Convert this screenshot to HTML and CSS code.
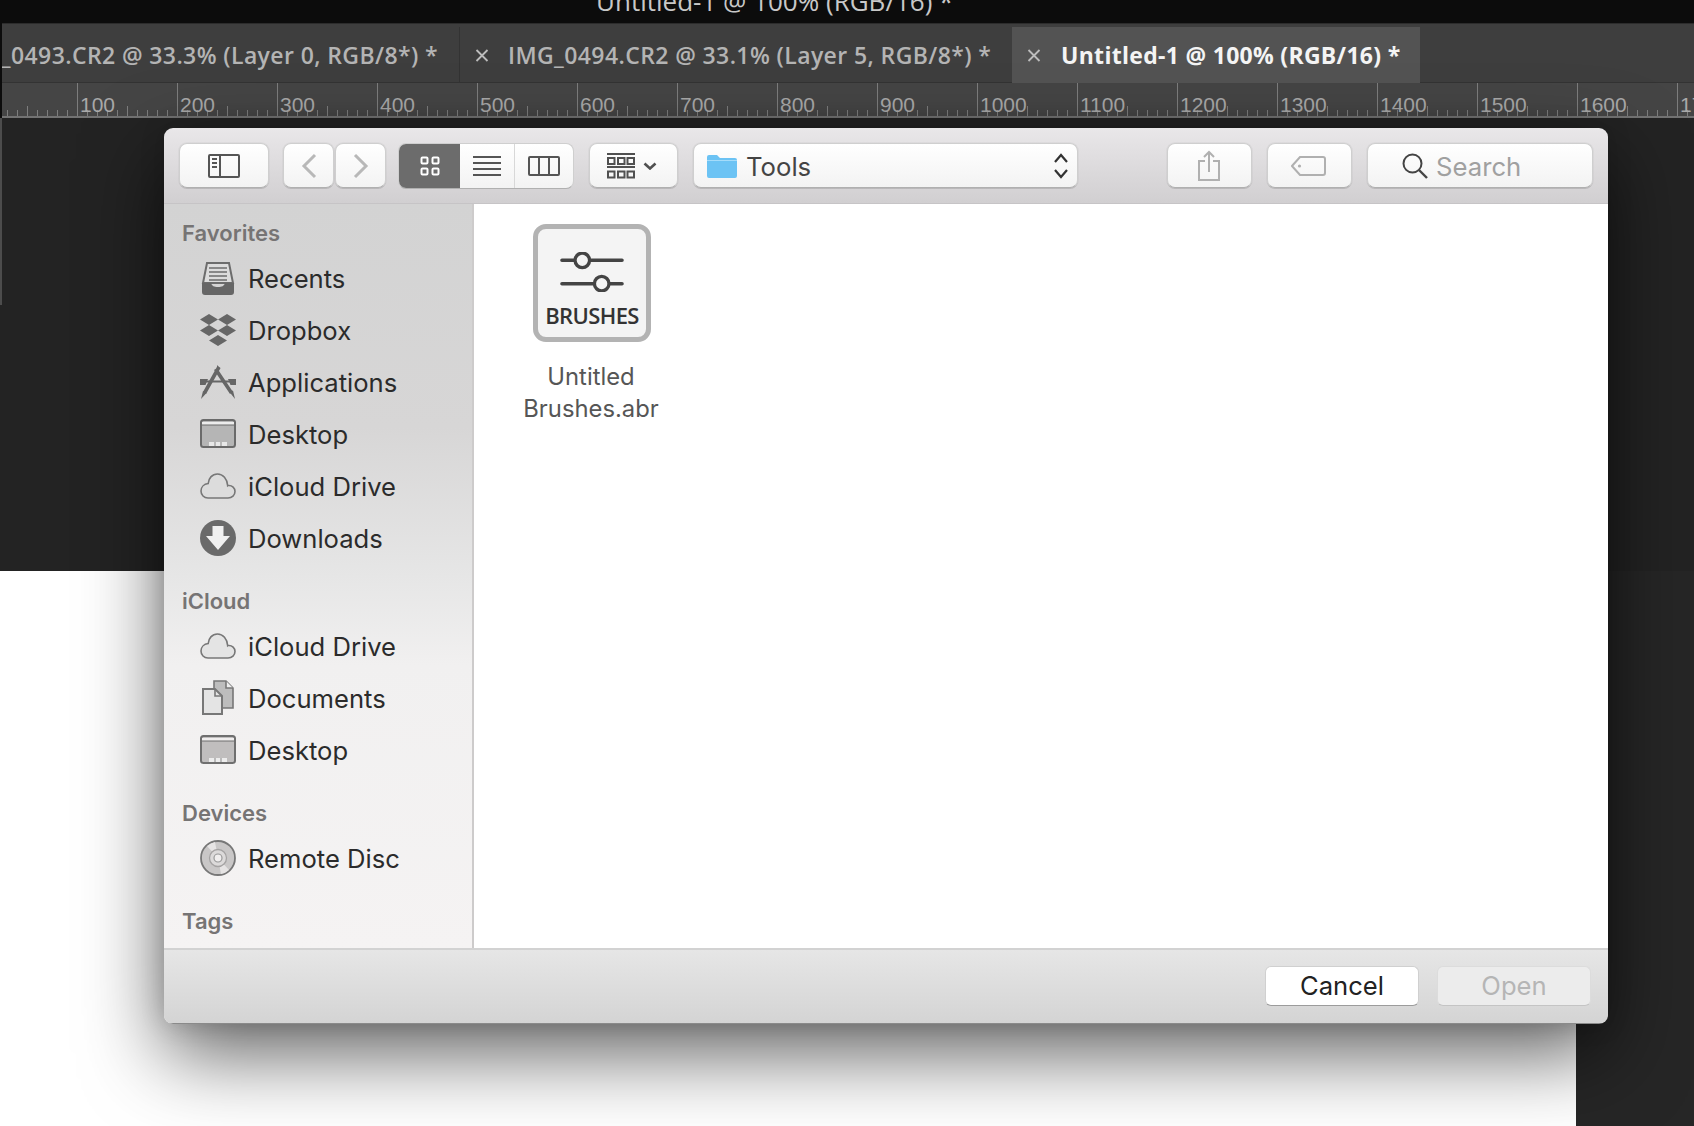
FILE: index.html
```html
<!DOCTYPE html>
<html lang="en">
<head>
<meta charset="utf-8">
<title>Open dialog</title>
<link rel="stylesheet" href="styles.css">
</head>
<body>
<div class="app">
  <div class="titlebar"><span class="title">Untitled-1 @ 100% (RGB/16) *</span></div>
  <div class="tabs">
    <div class="tab tab-first"><span class="tab-text">_0493.CR2 @ 33.3% (Layer 0, RGB/8*) *</span></div>
    <div class="tab tab-second">
      <svg class="close" width="14" height="13" viewBox="0 0 14 13"><path d="M1.5 1l11 11M12.5 1l-11 11"/></svg>
      <span class="tab-text">IMG_0494.CR2 @ 33.1% (Layer 5, RGB/8*) *</span>
    </div>
    <div class="tab tab-active">
      <svg class="close" width="14" height="13" viewBox="0 0 14 13"><path d="M1.5 1l11 11M12.5 1l-11 11"/></svg>
      <span class="tab-text">Untitled-1 @ 100% (RGB/16) *</span>
    </div>
  </div>
  <div class="ruler">
    <span class="mark">100</span><span class="mark">200</span><span class="mark">300</span><span class="mark">400</span><span class="mark">500</span><span class="mark">600</span><span class="mark">700</span><span class="mark">800</span><span class="mark">900</span><span class="mark">1000</span><span class="mark">1100</span><span class="mark">1200</span><span class="mark">1300</span><span class="mark">1400</span><span class="mark">1500</span><span class="mark">1600</span><span class="mark">1700</span>
  </div>
  <div class="canvas-dark"><div class="canvas-edge"></div></div>
  <div class="canvas-lower"><div class="paper"></div><div class="pasteboard"></div></div>
  <div class="app-edge"></div>

  <div class="dialog">
    <div class="toolbar">
      <button class="btn btn-sidebar">
        <svg width="32" height="24" viewBox="0 0 32 24"><g fill="none" stroke="#555" stroke-width="2"><rect x="1" y="1" width="30" height="22" rx="1"/><path d="M12 1v22"/></g><path d="M4 5h5M4 9h5M4 13h5" stroke="#555" stroke-width="2"/></svg>
      </button>
      <div class="nav">
        <button class="btn btn-nav"><svg width="16" height="26" viewBox="0 0 16 26"><path d="M14 2L3 13l11 11" fill="none" stroke="#b8b8b8" stroke-width="3"/></svg></button>
        <button class="btn btn-nav"><svg width="16" height="26" viewBox="0 0 16 26"><path d="M2 2l11 11L2 24" fill="none" stroke="#b8b8b8" stroke-width="3"/></svg></button>
      </div>
      <div class="segment">
        <div class="seg seg-on">
          <svg width="20" height="20" viewBox="0 0 20 20"><g fill="none" stroke="#fff" stroke-width="2"><rect x="1.5" y="1.5" width="6" height="6" rx="1"/><rect x="12.5" y="1.5" width="6" height="6" rx="1"/><rect x="1.5" y="12.5" width="6" height="6" rx="1"/><rect x="12.5" y="12.5" width="6" height="6" rx="1"/></g></svg>
        </div>
        <div class="seg seg-list">
          <svg width="28" height="20" viewBox="0 0 28 20"><path d="M0 1h28M0 7h28M0 13h28M0 19h28" stroke="#555" stroke-width="2"/></svg>
        </div>
        <div class="seg seg-cols">
          <svg width="32" height="20" viewBox="0 0 32 20"><g fill="none" stroke="#555" stroke-width="2"><rect x="1" y="1" width="30" height="18" rx="1"/><path d="M11 1v18M21 1v18"/></g></svg>
        </div>
      </div>
      <button class="btn btn-group">
        <svg width="28" height="26" viewBox="0 0 28 26"><g stroke="#505050" stroke-width="2" fill="none"><path d="M0 1h28M0 14h28"/><rect x="1" y="5" width="6.5" height="6"/><rect x="11" y="5" width="6.5" height="6"/><rect x="20.500" y="5" width="6.5" height="6"/><rect x="1" y="18.500" width="6.5" height="6"/><rect x="11" y="18.500" width="6.5" height="6"/><rect x="20.500" y="18.500" width="6.5" height="6"/></g></svg>
        <svg width="14" height="8" viewBox="0 0 14 8"><path d="M1.500 1.500L7 6.500l5.500-5" fill="none" stroke="#505050" stroke-width="2.600"/></svg>
      </button>
      <button class="btn btn-path">
        <svg width="30" height="24" viewBox="0 0 30 24"><path d="M0 3a2 2 0 0 1 2-2h8l3 3h15a2 2 0 0 1 2 2v16a2 2 0 0 1-2 2H2a2 2 0 0 1-2-2z" fill="#6cc3f4"/><path d="M0 6h30v1H0z" fill="#a5dcfa"/></svg>
        <span class="path-name">Tools</span>
        <svg class="stepper" width="16" height="26" viewBox="0 0 16 26"><path d="M2 9l6-7 6 7M2 17l6 7 6-7" fill="none" stroke="#333" stroke-width="2.200"/></svg>
      </button>
      <button class="btn btn-share">
        <svg width="24" height="31" viewBox="0 0 24 31"><g fill="none" stroke="#b0b0b0" stroke-width="2"><path d="M8 11H2v19h20V11h-6"/><path d="M12 22V2M7 7l5-5 5 5"/></g></svg>
      </button>
      <button class="btn btn-tag">
        <svg width="35" height="20" viewBox="0 0 35 20"><path d="M9 1h23a2 2 0 0 1 2 2v14a2 2 0 0 1-2 2H9L1 10z" fill="none" stroke="#b0b0b0" stroke-width="2"/><circle cx="8.500" cy="10" r="1.600" fill="#b0b0b0"/></svg>
      </button>
      <div class="btn btn-search">
        <svg width="26" height="26" viewBox="0 0 26 26"><circle cx="10.500" cy="10.500" r="9" fill="none" stroke="#444" stroke-width="2"/><path d="M17 17l8 8" stroke="#444" stroke-width="2.400"/></svg>
        <span class="search-text">Search</span>
      </div>
    </div>

    <div class="main">
      <nav class="sidebar">
        <div class="head">Favorites</div>
        <div class="row">
          <svg class="ico" width="36" height="36" viewBox="0 0 36 36"><path d="M7 3h22l4 20H3z" fill="#dcdcdc" stroke="#6c6c6c" stroke-width="2"/><path d="M9 8h18M9 12h18M9 16h18M9 20h18" stroke="#6c6c6c" stroke-width="1.600"/><path d="M2 23h9c1 3 3 4 7 4s6-1 7-4h9v9a3 3 0 0 1-3 3H5a3 3 0 0 1-3-3z" fill="#666"/></svg>
          <span>Recents</span>
        </div>
        <div class="row">
          <svg class="ico" width="36" height="36" viewBox="0 0 36 36"><path d="M9 2l9 5.500-9 5.500-9-5.500zM27 2l9 5.500-9 5.500-9-5.500zM9 13l9 5.500-9 5.500-9-5.500zM27 13l9 5.500-9 5.500-9-5.500zM18 23l9 5.500-9 5.500-9-5.500z" fill="#666"/></svg>
          <span>Dropbox</span>
        </div>
        <div class="row">
          <svg class="ico" width="36" height="36" viewBox="0 0 36 36"><path d="M0 15h8l-2.500 6H0zM36 15h-8l2.500 6H36z" fill="#666"/><path d="M6 17.500h24" stroke="#666" stroke-width="2"/><path d="M19 3L4.500 29M15.500 5L31.500 29" fill="none" stroke="#666" stroke-width="3.600"/><path d="M17 1l3 3-3 2zM3 27l3.500 2L1 35zM29.500 28l3.500-1.500L35 35z" fill="#666"/></svg>
          <span>Applications</span>
        </div>
        <div class="row">
          <svg class="ico" width="36" height="36" viewBox="0 0 36 36"><rect x="1" y="4" width="34" height="27" rx="2.500" fill="#b5b5b5" stroke="#6a6a6a" stroke-width="2"/><path d="M2 6h32v3H2z" fill="#ececec"/><path d="M2 9h32" stroke="#6a6a6a"/><path d="M9 26h18v4H9z" fill="#e8e8e8"/><path d="M15 26v4M21 26v4" stroke="#888"/></svg>
          <span>Desktop</span>
        </div>
        <div class="row">
          <svg class="ico" width="36" height="36" viewBox="0 0 36 36"><path d="M8 30H28c4 0 7-3 7-6.500 0-3.500-3-6-6-6-.5 0-1 0-1.300.2C27.200 11 23 6 17.500 6 12 6 8.500 10.500 8.200 15.500 4 16 1 19 1 23c0 4 3 7 7 7z" fill="#dcdcdc" stroke="#777" stroke-width="1.600"/></svg>
          <span>iCloud Drive</span>
        </div>
        <div class="row">
          <svg class="ico" width="36" height="36" viewBox="0 0 36 36"><circle cx="18" cy="18" r="18" fill="#6a6a6a"/><path d="M12.500 6h11v10h6.500L18 30 6 16h6.500z" fill="#f0f0f0"/></svg>
          <span>Downloads</span>
        </div>

        <div class="head head-gap">iCloud</div>
        <div class="row">
          <svg class="ico" width="36" height="36" viewBox="0 0 36 36"><path d="M8 30H28c4 0 7-3 7-6.500 0-3.500-3-6-6-6-.5 0-1 0-1.300.2C27.200 11 23 6 17.500 6 12 6 8.500 10.500 8.200 15.500 4 16 1 19 1 23c0 4 3 7 7 7z" fill="#e4e4e4" stroke="#777" stroke-width="1.600"/></svg>
          <span>iCloud Drive</span>
        </div>
        <div class="row">
          <svg class="ico" width="36" height="36" viewBox="0 0 36 36"><path d="M14 1h12l7 7v20H14z" fill="#bdbdbd" stroke="#777" stroke-width="1.600"/><path d="M26 1v7h7" fill="#eee" stroke="#777" stroke-width="1.600"/><path d="M3 9h12l7 7v18H3z" fill="#e4e4e4" stroke="#777" stroke-width="2"/><path d="M15 9v7h7" fill="none" stroke="#777" stroke-width="1.600"/></svg>
          <span>Documents</span>
        </div>
        <div class="row">
          <svg class="ico" width="36" height="36" viewBox="0 0 36 36"><rect x="1" y="4" width="34" height="27" rx="2.500" fill="#c0bebe" stroke="#6f6f6f" stroke-width="2"/><path d="M2 6h32v3H2z" fill="#f0eeee"/><path d="M2 9h32" stroke="#6f6f6f"/><path d="M9 26h18v4H9z" fill="#ececec"/><path d="M15 26v4M21 26v4" stroke="#888"/></svg>
          <span>Desktop</span>
        </div>

        <div class="head head-gap">Devices</div>
        <div class="row">
          <svg class="ico" width="36" height="36" viewBox="0 0 36 36"><circle cx="18" cy="18" r="17" fill="#c9c7c7" stroke="#777" stroke-width="1.800"/><path d="M18 18L7 6a16 16 0 0 1 8-4zM18 18l11 12a16 16 0 0 1-8 4z" fill="#e6e4e4"/><circle cx="18" cy="18" r="8.500" fill="#dcdada" stroke="#a5a3a3" stroke-width="1.300"/><circle cx="18" cy="18" r="4" fill="#f0eeee" stroke="#999" stroke-width="1.200"/></svg>
          <span>Remote Disc</span>
        </div>

        <div class="head head-gap">Tags</div>
      </nav>

      <section class="files">
        <div class="file">
          <div class="file-icon">
            <svg width="64" height="40" viewBox="0 0 66 40"><g fill="none" stroke="#444" stroke-width="3.600" stroke-linecap="round"><path d="M2 8h13M31 8h33M2 32h33M51 32h13"/></g><g fill="#f4f4f4" stroke="#444" stroke-width="3.400"><circle cx="23" cy="8" r="7.500"/><circle cx="43" cy="32" r="7.500"/></g></svg>
            <span class="file-badge">BRUSHES</span>
          </div>
          <div class="file-name">Untitled<br>Brushes.abr</div>
        </div>
      </section>
    </div>

    <div class="footer">
      <button class="action action-cancel">Cancel</button>
      <button class="action action-open">Open</button>
    </div>
  </div>
</div>
</body>
</html>
```
FILE: styles.css
```css
* { box-sizing: border-box; }
html, body { margin: 0; padding: 0; }
body {
  width: 1694px;
  height: 1126px;
  overflow: hidden;
  background: #232323;
  font-family: Inter, "Liberation Sans", sans-serif;
}
.app {
  position: relative;
  width: 1694px;
  height: 1126px;
  display: flex;
  flex-direction: column;
  overflow: hidden;
}
.app-edge {
  position: absolute;
  left: 0;
  top: 0;
  width: 2px;
  height: 118px;
  background: #0c0c0c;
}

/* Photoshop chrome */
.titlebar {
  height: 23px;
  flex: none;
  padding-left: 596px;
  background: #0c0c0c;
  display: flex;
  overflow: hidden;
}
.title {
  margin-top: -17px;
  font: 400 26px/36px "Open Sans", sans-serif;
  color: #c8c8c8;
  white-space: nowrap;
}
.tabs {
  height: 60px;
  flex: none;
  display: flex;
  padding-top: 3px;
  background: #3e3e3e;
  border-top: 1px solid #2c2c2c;
  border-bottom: 1px solid #333;
}
.tab {
  display: flex;
  align-items: center;
  height: 56px;
  white-space: nowrap;
  color: #b4b4b4;
}
.tab-text {
  font: 600 23px/30px "Open Sans", sans-serif;
  letter-spacing: 0.4px;
}
.tab-first {
  width: 459px;
  justify-content: flex-end;
  padding-right: 21px;
  overflow: hidden;
}
.tab-second {
  width: 553px;
  padding-left: 15px;
  gap: 19px;
  border-left: 1px solid #333;
}
.tab-active {
  width: 408px;
  padding-left: 15px;
  gap: 20px;
  background: #535353;
  color: #f4f4f4;
}
.tab-active .tab-text { font-weight: 700; letter-spacing: 0.3px; }
.close path { fill: none; stroke: #bdbdbd; stroke-width: 1.8; }
.ruler {
  height: 35px;
  flex: none;
  display: flex;
  padding-left: 77px;
  background-color: #454545;
  background-image:
    linear-gradient(90deg, #7d7d7d 1px, transparent 1px),
    linear-gradient(90deg, #7d7d7d 1px, transparent 1px);
  background-size: 10px 6px, 100px 10px;
  background-position: 7px bottom, 27px bottom;
  background-repeat: repeat-x;
  border-bottom: 2px solid #737373;
}
.mark {
  width: 100px;
  flex: none;
  padding: 10px 0 0 2px;
  border-left: 1px solid #7d7d7d;
  font: 400 21px/23px "Liberation Sans", sans-serif;
  color: #a9a9a9;
}
.canvas-dark {
  height: 453px;
  flex: none;
  background: #232323;
}
.canvas-edge {
  width: 2px;
  height: 187px;
  background: #4c4c4c;
}
.canvas-lower {
  flex: 1;
  display: flex;
}
.paper { flex: 1; background: #fff; }
.pasteboard { width: 118px; background: #262626; }

/* Dialog */
.dialog {
  position: absolute;
  z-index: 1;
  left: 164px;
  top: 128px;
  width: 1444px;
  height: 896px;
  display: flex;
  flex-direction: column;
  border-radius: 9px;
  overflow: hidden;
}
.toolbar {
  height: 76px;
  flex: none;
  display: flex;
  align-items: flex-start;
  gap: 15px;
  padding: 15px 15px 0;
  background: linear-gradient(#e9e7e9, #d1cfd1);
  border-bottom: 1px solid #c6c4c6;
}
.btn {
  height: 45px;
  flex: none;
  display: flex;
  align-items: center;
  justify-content: center;
  padding: 0;
  border: 1px solid #cfcfcf;
  border-bottom-color: #b0b0b0;
  border-radius: 8px;
  background: linear-gradient(#ffffff, #f3f3f3);
  box-shadow: 0 0 0 1px rgba(0, 0, 0, 0.03), 0 1px 0 rgba(0, 0, 0, 0.1);
  font-family: inherit;
}
.btn-sidebar { width: 90px; }
.nav { display: flex; gap: 1px; margin: 0 -3px 0 -1px; }
.btn-nav { width: 51px; }
.segment {
  width: 176px;
  height: 46px;
  flex: none;
  display: flex;
  border-radius: 8px;
  overflow: hidden;
  border: 1px solid #cfcfcf;
  border-bottom-color: #b0b0b0;
  background: linear-gradient(#ffffff, #f3f3f3);
}
.seg { display: flex; align-items: center; justify-content: center; }
.seg-on { width: 61px; padding-left: 1px; background: #6c6c6c; }
.seg-list { width: 55px; border-right: 1px solid #d8d8d8; }
.seg-cols { width: 58px; }
.btn-group { width: 89px; gap: 8px; padding-right: 3px; }
.btn-path {
  width: 385px;
  justify-content: flex-start;
  padding: 0 8px 0 13px;
  gap: 9px;
}
.path-name { padding-top: 2px; font-size: 25.7px; color: #444; }
.stepper { margin-left: auto; }
.btn-share { width: 85px; margin-left: 74px; padding-right: 2px; }
.btn-tag { width: 85px; padding-right: 3px; }
.btn-search {
  width: 226px;
  justify-content: flex-start;
  padding-left: 34px;
  gap: 8px;
}
.search-text { padding-top: 2px; font-size: 25.7px; color: #a0a0a0; }

.main {
  flex: 1;
  display: flex;
  min-height: 0;
}
.sidebar {
  width: 310px;
  flex: none;
  padding-top: 10px;
  overflow: hidden;
  border-right: 2px solid #cdcbcb;
  background: linear-gradient(#d3d3d3 0, #d7d6d6 30%, #e6e6e6 50%, #f1f0f0 62%, #f5f3f3 100%);
}
.head {
  height: 38px;
  padding-left: 18px;
  font-size: 22px;
  font-weight: 600;
  line-height: 39px;
  color: #767474;
}
.head-gap { margin-top: 18px; }
.row {
  height: 52px;
  display: flex;
  align-items: center;
  gap: 12px;
  padding-left: 36px;
  font-size: 25.6px;
  color: #2b2b2b;
}
.ico { flex: none; }
.files {
  flex: 1;
  background: #fff;
  padding: 20px 0 0 33px;
}
.file {
  width: 170px;
  display: flex;
  flex-direction: column;
  align-items: center;
}
.file-icon {
  width: 118px;
  height: 118px;
  display: flex;
  flex-direction: column;
  align-items: center;
  padding-top: 23px;
  background: #f4f4f4;
  border: 5px solid #b3b3b3;
  border-radius: 13px;
}
.file-badge {
  margin-top: 8px;
  font: 600 22px/30px "Open Sans", sans-serif;
  color: #333;
  letter-spacing: -0.6px;
}
.file-name {
  margin: 19px 0 0 -2px;
  text-align: center;
  font-size: 23.8px;
  line-height: 32px;
  color: #565656;
}
.footer {
  height: 76px;
  flex: none;
  display: flex;
  justify-content: flex-end;
  align-items: flex-start;
  gap: 18px;
  padding: 16px 17px 0 0;
  background: linear-gradient(#e6e6e6, #d4d4d4);
  border-top: 2px solid #d2d2d2;
  border-bottom: 1px solid #8a8a8a;
}
.action {
  width: 154px;
  height: 40px;
  padding: 0;
  border-radius: 6px;
  font-family: inherit;
  font-size: 25.6px;
  line-height: 36px;
}
.action-cancel {
  background: #fff;
  color: #222;
  border: 1px solid #d0d0d0;
  border-bottom-color: #9c9c9c;
}
.action-open {
  background: #ececec;
  color: #b5b5b5;
  border: 1px solid #dcdcdc;
  border-bottom-color: #c4c4c4;
}
/* Window shadow: drawn behind the clipped dialog */
.app::after {
  content: "";
  position: absolute;
  left: 164px;
  top: 128px;
  width: 1444px;
  height: 896px;
  border-radius: 9px;
  box-shadow: 0 30px 80px rgba(0, 0, 0, 0.62), 0 0 24px rgba(0, 0, 0, 0.15);
  pointer-events: none;
}
```
